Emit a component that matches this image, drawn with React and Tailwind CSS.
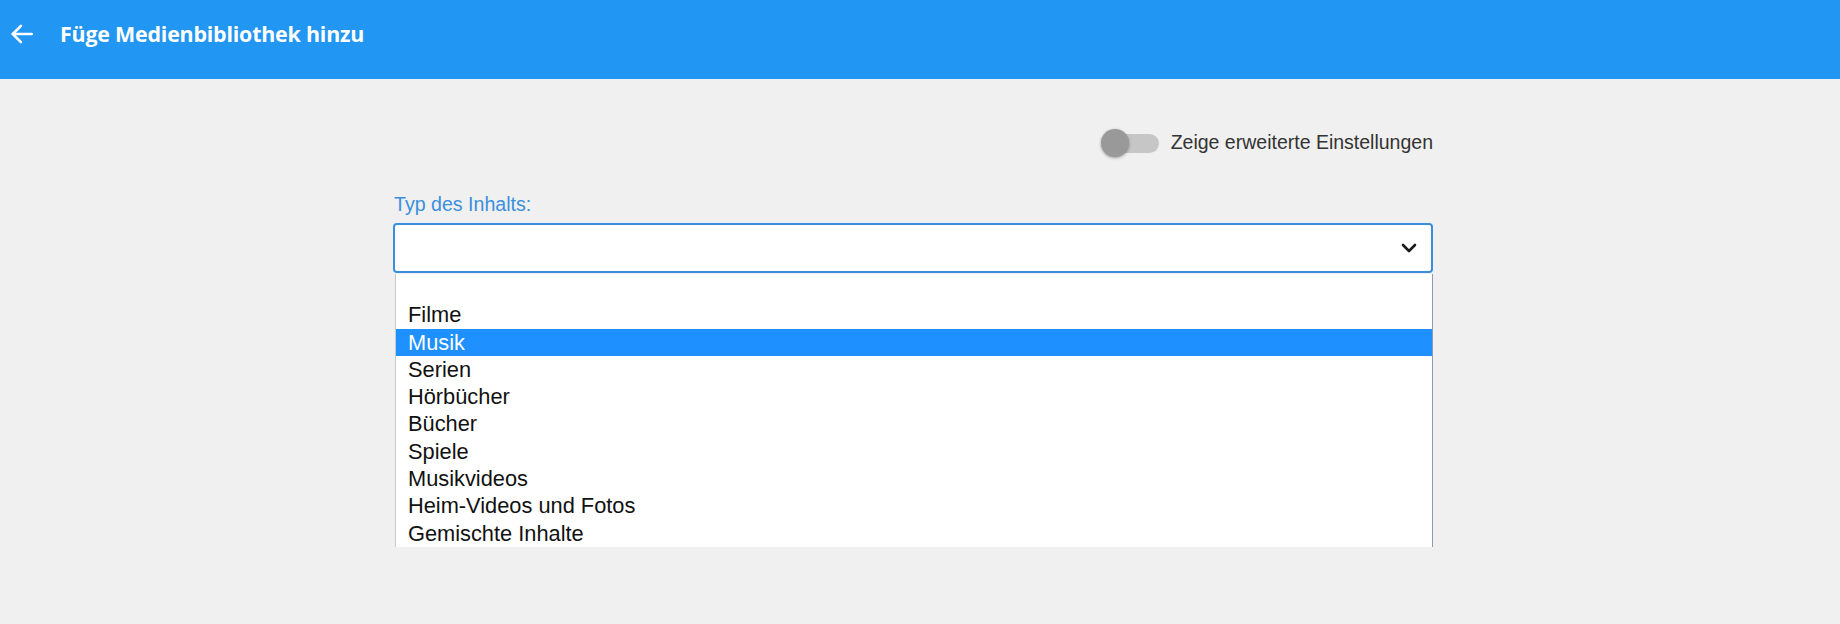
import { useState } from "react";

const options = [
  "",
  "Filme",
  "Musik",
  "Serien",
  "Hörbücher",
  "Bücher",
  "Spiele",
  "Musikvideos",
  "Heim-Videos und Fotos",
  "Gemischte Inhalte",
];

export default function App() {
  const [selected] = useState("Musik");

  return (
    <div className="min-h-[624px] bg-[#f0f0f0] font-['Liberation_Sans',Arial,sans-serif]">
      {/* Kopfzeile */}
      <header className="h-[79px] bg-[#2196f3] flex items-start pt-[19px] text-white">
        <button className="w-[44px] h-[30px] flex items-center justify-center">
          <svg width="26" height="26" viewBox="0 0 24 24" fill="none" stroke="white" strokeWidth="2.4" strokeLinecap="round" strokeLinejoin="round">
            <path d="M21 12H3.5" />
            <path d="M11 4.5L3.5 12l7.5 7.5" />
          </svg>
        </button>
        <h1 className="ml-[16px] text-[21.4px] leading-[30px] font-bold font-['Open_Sans',sans-serif] tracking-[-0.2px]">
          Füge Medienbibliothek hinzu
        </h1>
      </header>

      <div className="ml-[393px] w-[1040px] pt-[50px]">
        {/* Schalter */}
        <div className="flex justify-end items-center h-[28px]">
          <div className="relative w-[58px] h-[28px] flex items-center">
            <div className="w-[56px] h-[19px] rounded-full bg-[#c6c6c6] ml-[2px]" />
            <div className="absolute left-[0px] top-[0px] w-[28px] h-[28px] rounded-full bg-[#999999] shadow-[0_1px_3px_rgba(0,0,0,0.35)]" />
          </div>
          <span className="ml-[12px] text-[19.5px] text-[#333333]">Zeige erweiterte Einstellungen</span>
        </div>

        {/* Auswahl */}
        <div className="mt-[36px]">
          <label className="block text-[19.6px] leading-[22px] text-[#3a8fdd] pl-[1px]">Typ des Inhalts:</label>
          <div className="relative mt-[8px]">
            <div className="h-[50px] rounded-[4px] border-2 border-[#3a8fdd] bg-white flex items-center justify-end pr-[14px]">
              <svg width="16" height="10" viewBox="0 0 16 10" fill="none" stroke="#1a1a1a" strokeWidth="2.6" strokeLinecap="round" strokeLinejoin="round">
                <path d="M2 2l6 6 6-6" />
              </svg>
            </div>
            <ul className="absolute left-[2px] right-0 top-[51px] bg-white border-l border-r border-[#8e9bb0] border-l-[#c8c8c8]">
              {options.map((o, i) => (
                <li
                  key={i}
                  className={`h-[27.3px] leading-[27.3px] pl-[12px] text-[21.8px] ${
                    o === selected ? "bg-[#1e90ff] text-white" : "text-[#111]"
                  }`}
                >
                  {o}
                </li>
              ))}
            </ul>
          </div>
        </div>
      </div>
    </div>
  );
}
